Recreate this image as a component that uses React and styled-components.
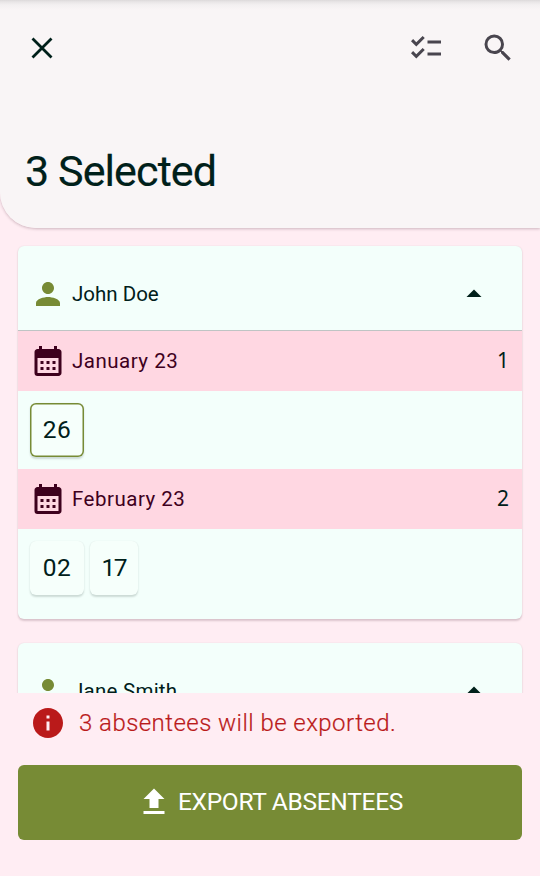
import React from "react";
import styled, { createGlobalStyle } from "styled-components";
import {
  MdArrowDropUp,
  MdCalendarMonth,
  MdChecklist,
  MdInfo,
  MdPerson,
  MdSearch,
} from "react-icons/md";

const GlobalStyle = createGlobalStyle`
  * { box-sizing: border-box; }
  body {
    margin: 0;
    font-family: Roboto, "Liberation Sans", sans-serif;
    background: #ffedf3;
    color: #00201a;
  }
  svg { display: block; flex: none; }
`;

const Screen = styled.div`
  display: flex;
  flex-direction: column;
  width: 540px;
  height: 876px;
  overflow: hidden;
  background: #ffedf3;
`;

const Header = styled.header`
  display: flex;
  flex-direction: column;
  justify-content: space-between;
  flex: none;
  height: 228px;
  padding: 30px 24px 31px;
  border-bottom-left-radius: 36px;
  background: linear-gradient(#dcd9da 0, #e9e6e7 2px, #f3f0f1 5px, #f9f5f6 10px);
  box-shadow: 0 1px 3px rgba(60, 20, 40, 0.26);
`;

const Toolbar = styled.div`
  display: flex;
  align-items: center;
  height: 36px;
  color: #49454e;
`;

const IconButton = styled.button`
  display: flex;
  padding: 0;
  border: 0;
  background: none;
  color: ${(p) => p.$color || "inherit"};
  margin-left: ${(p) => p.$gap || "0"};
`;

const Title = styled.h1`
  margin: 0;
  padding-left: 1px;
  font-size: 43px;
  line-height: 52px;
  font-weight: 400;
  letter-spacing: -0.9px;
  -webkit-text-stroke: 0.2px #00201a;
`;

const List = styled.main`
  display: flex;
  flex-direction: column;
  gap: 24px;
  flex: none;
  height: 465px;
  padding: 18px 18px 0;
  overflow: hidden;
`;

const Card = styled.section`
  flex: none;
  border-radius: 6px;
  background: #f3fffb;
  box-shadow: 0 1.5px 2px rgba(60, 20, 40, 0.18), 0 0 1.5px rgba(60, 20, 40, 0.08);
  overflow: hidden;
`;

const PersonRow = styled.div`
  display: flex;
  align-items: center;
  height: 85px;
  padding: 12px 30px 0 12px;
  border-bottom: 1px solid #bfc4c4;
`;

const Label = styled.span`
  flex: 1;
  margin-left: 6px;
  padding-bottom: 1px;
  font-size: 20.5px;
  line-height: 24px;
  letter-spacing: ${(p) => p.$spacing || "0"};
`;

const MonthRow = styled.div`
  display: flex;
  align-items: center;
  height: 60px;
  padding: 0 13px 0 12px;
  background: #ffd7e2;
  color: #3e001d;
`;

const Count = styled.span`
  padding-bottom: 2px;
  font-family: "Noto Sans", sans-serif;
  font-size: 21px;
  line-height: 24px;
  color: #00201a;
`;

const Days = styled.div`
  display: flex;
  gap: 6px;
  height: ${(p) => p.$height};
  padding: 12px 12px 0;
`;

const Day = styled.span`
  display: flex;
  align-items: center;
  justify-content: center;
  width: ${(p) => p.$width};
  height: 54px;
  padding-bottom: 1px;
  border-radius: 6px;
  background: #f6fffb;
  box-shadow:
    inset 0 0 0 1.5px ${(p) => (p.$active ? "#778b35" : "transparent")},
    0 1.5px 2px rgba(0, 32, 26, 0.16),
    0 0 1px rgba(0, 32, 26, 0.06);
  font-size: 24.5px;
  letter-spacing: ${(p) => p.$spacing || "0.4px"};
`;

const Footer = styled.footer`
  display: flex;
  flex-direction: column;
  gap: 27px;
  flex: 1;
  padding: 12px 18px 0;
`;

const Notice = styled.p`
  display: flex;
  align-items: center;
  gap: 13px;
  height: 36px;
  margin: 0;
  padding-left: 12px;
  color: #ba1a1a;
  font-size: 24px;
  font-weight: 300;
  letter-spacing: 0.45px;
  -webkit-text-stroke: 0.2px #ba1a1a;
`;

const ExportButton = styled.button`
  display: flex;
  align-items: center;
  justify-content: center;
  gap: 6px;
  height: 75px;
  margin-top: -3px;
  padding: 0 1px 1px 0;
  border: 0;
  border-radius: 6px;
  background: #778b35;
  color: #ffffff;
  font-family: inherit;
  font-size: 24.5px;
  letter-spacing: -0.3px;
`;

const ButtonText = styled.span`
  padding-bottom: 2px;
`;

const CloseIcon = () => (
  <svg width="36" height="36" viewBox="0 0 36 36" fill="none" stroke="currentColor" strokeWidth="2.8">
    <path d="M8.5 8.5 27.5 27.5M27.5 8.5 8.5 27.5" />
  </svg>
);

const UploadIcon = () => (
  <svg width="36" height="36" viewBox="0 0 24 24" fill="currentColor">
    <path d="M5 20h14v-2H5v2zM5 10h4v6h6v-6h4l-7-7-7 7z" />
  </svg>
);

function Person({ name, spacing, months = [] }) {
  return (
    <Card>
      <PersonRow>
        <MdPerson size={36} color="#778b35" />
        <Label $spacing={spacing}>{name}</Label>
        <MdArrowDropUp size={36} />
      </PersonRow>
      {months.map((m) => (
        <React.Fragment key={m.name}>
          <MonthRow>
            <MdCalendarMonth size={36} />
            <Label $spacing="0.5px">{m.name}</Label>
            <Count>{m.days.length}</Count>
          </MonthRow>
          <Days $height={m.height}>
            {m.days.map((d) => (
              <Day key={d.label} $active={d.active} $width={d.width} $spacing={d.spacing}>
                {d.label}
              </Day>
            ))}
          </Days>
        </React.Fragment>
      ))}
    </Card>
  );
}

const johnMonths = [
  { name: "January 23", height: "78px", days: [{ label: "26", width: "54px", active: true }] },
  {
    name: "February 23",
    height: "90px",
    days: [
      { label: "02", width: "54px" },
      { label: "17", width: "47.5px", spacing: "-1.5px" },
    ],
  },
];

export default function App() {
  return (
    <>
      <GlobalStyle />
      <Screen>
        <Header>
          <Toolbar>
            <IconButton $color="#00201a" aria-label="Close"><CloseIcon /></IconButton>
            <IconButton $gap="auto" aria-label="Select all"><MdChecklist size={36} /></IconButton>
            <IconButton $gap="36px" aria-label="Search"><MdSearch size={36} /></IconButton>
          </Toolbar>
          <Title>3 Selected</Title>
        </Header>
        <List>
          <Person name="John Doe" months={johnMonths} />
          <Person name="Jane Smith" spacing="0.25px" />
        </List>
        <Footer>
          <Notice>
            <MdInfo size={36} />
            3 absentees will be exported.
          </Notice>
          <ExportButton>
            <UploadIcon />
            <ButtonText>EXPORT ABSENTEES</ButtonText>
          </ExportButton>
        </Footer>
      </Screen>
    </>
  );
}
